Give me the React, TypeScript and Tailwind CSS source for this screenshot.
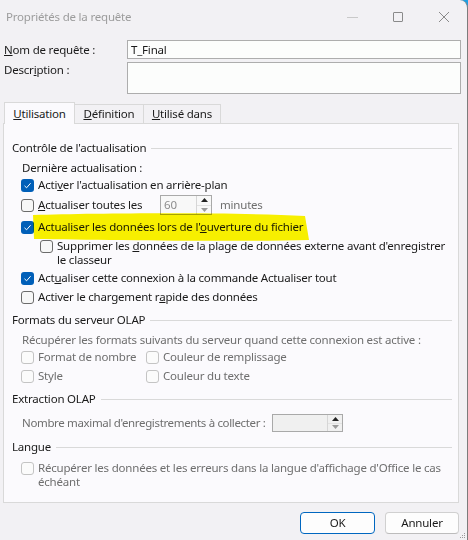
import React from 'react';

const font = "font-['Noto_Sans',sans-serif] text-[11.5px] tracking-[-0.2px]";

function Box({ checked = false, disabled = false }: { checked?: boolean; disabled?: boolean }) {
  if (checked) {
    return (
      <div className="w-[13px] h-[13px] shrink-0 rounded-[3px] bg-[#005fb8] flex items-center justify-center">
        <svg width="9" height="9" viewBox="0 0 9 9">
          <path d="M1.5 4.8 L3.6 6.8 L7.6 2.2" fill="none" stroke="#ffffff" strokeWidth="1" />
        </svg>
      </div>
    );
  }
  return (
    <div
      className={
        disabled
          ? 'w-[13px] h-[13px] shrink-0 rounded-[3px] border border-[#c4c4c4] bg-[#fbfbfb]'
          : 'w-[13px] h-[13px] shrink-0 rounded-[3px] border border-[#6b6b6b] bg-[#f7f7f7]'
      }
    />
  );
}

function Heading({ label, className }: { label: string; className: string }) {
  return (
    <div className={'flex items-center h-[16px] pl-[8px] pr-[6px] text-[#1a1a1a] ' + className}>
      <span className="whitespace-nowrap">{label}</span>
      <div className="flex-1 h-px bg-[#d9d9d9] ml-[5px]" />
    </div>
  );
}

function Spin({ width, value, bg }: { width: string; value?: string; bg: string }) {
  return (
    <div className={'flex shrink-0 border border-[#a9a9a9] ' + width + ' ' + bg}>
      <div className="flex-1 pl-[3px] text-[#8d8d8d] flex items-center">{value}</div>
      <div className="w-[15px] flex flex-col border-l border-[#d6d6d6]">
        <div className="flex-1 flex items-center justify-center border-b border-[#e2e2e2]">
          <svg width="7" height="4" viewBox="0 0 7 4"><path d="M0 4 L3.5 0 L7 4 Z" fill="#222" /></svg>
        </div>
        <div className="flex-1 flex items-center justify-center">
          <svg width="7" height="4" viewBox="0 0 7 4"><path d="M0 0 L3.5 4 L7 0 Z" fill="#9a9a9a" /></svg>
        </div>
      </div>
    </div>
  );
}

export default function App() {
  return (
    <div className={'w-[468px] h-[540px] bg-[#1e9fe2] overflow-hidden text-[#1a1a1a] ' + font}>
      <div className="relative w-[468px] h-[540px] bg-[#f2f1f4] rounded-tr-[8px] border-r border-[#7c7c7c]">
        {/* Title bar */}
        <div className="flex h-[34px] items-center">
          <div className="pl-[6px] text-[#9c9c9c] flex-1">Propriétés de la requête</div>
          <div className="flex h-full">
            <div className="w-[46px] flex items-center justify-center">
              <div className="w-[11px] h-px bg-[#c9c9c9]" />
            </div>
            <div className="w-[46px] flex items-center justify-center">
              <div className="w-[10px] h-[10px] border border-[#8a8a8a] rounded-[1px]" />
            </div>
            <div className="w-[46px] flex items-center justify-center">
              <svg width="12" height="12" viewBox="0 0 12 12">
                <path d="M1 1 L11 11 M11 1 L1 11" stroke="#8a8a8a" strokeWidth="1" />
              </svg>
            </div>
          </div>
        </div>

        {/* Name / description */}
        <div className="pl-[4px]">
          <div className="flex items-center mt-[6px] h-[19px]">
            <div className="w-[123px]"><u>N</u>om de requête :</div>
            <div className="w-[334px] h-[19px] border border-[#adadad] bg-[#fcfdfc] pl-[3px] flex items-center">T_Final</div>
          </div>
          <div className="flex items-start mt-[3px]">
            <div className="w-[123px] leading-[16px]">Descr<u>i</u>ption :</div>
            <div className="w-[334px] h-[32px] border border-[#adadad] bg-[#fcfdfc]" />
          </div>
        </div>

        {/* Tabs */}
        <div className="flex items-end h-[21px] mt-[8px] pl-[4px]">
          <div className="relative z-10 -mb-px w-[71px] h-[22px] border border-b-0 border-[#d9d9d9] bg-[#fbfafd] flex items-center justify-center">
            <span><u>U</u>tilisation</span>
          </div>
          <div className="w-[69px] h-[19px] border border-l-0 border-b-0 border-[#d9d9d9] bg-[#f2f1f4] flex items-center justify-center">
            <span><u>D</u>éfinition</span>
          </div>
          <div className="w-[77px] h-[19px] border border-l-0 border-b-0 border-[#d9d9d9] bg-[#f2f1f4] flex items-center justify-center">
            <span><u>U</u>tilisé dans</span>
          </div>
        </div>

        {/* Panel */}
        <div className="relative ml-[3px] w-[456px] h-[380px] border border-[#d9d9d9] bg-[#fbfafd] pt-[16px]">
          <Heading label="Contrôle de l'actualisation" className="" />
          <div className="mt-[4px] h-[16px] pl-[18px] flex items-center">Dernière actualisation :</div>
          <div className="mt-[1px] h-[16px] pl-[17px] flex items-center gap-[4px]">
            <Box checked />
            <span>Acti<u>v</u>er l'actualisation en arrière-plan</span>
          </div>
          <div className="mt-[4px] h-[16px] pl-[17px] flex items-center gap-[4px]">
            <Box />
            <span className="w-[118px] whitespace-nowrap"><u>A</u>ctualiser toutes les</span>
            <Spin width="w-[52px] h-[20px]" value="60" bg="bg-[#f8f8f8]" />
            <span className="ml-[4px] text-[#6e6e6e]">minutes</span>
          </div>
          <div className="mt-[6px] h-[16px] pl-[17px] flex items-center gap-[4px]">
            <Box checked />
            <span>Actualiser les données lors de l'<u>o</u>uverture du fichier</span>
          </div>
          <div className="mt-[4px] pl-[36px] flex items-start gap-[4px] leading-[14px]">
            <div className="pt-[1px]"><Box /></div>
            <span className="whitespace-nowrap">
              Supprimer les <u>d</u>onnées de la plage de données externe avant d'enregistrer<br />le classeur
            </span>
          </div>
          <div className="mt-[3px] h-[16px] pl-[17px] flex items-center gap-[4px]">
            <Box checked />
            <span>Act<u>u</u>aliser cette connexion à la commande Actualiser tout</span>
          </div>
          <div className="mt-[3px] h-[16px] pl-[17px] flex items-center gap-[4px]">
            <Box />
            <span>Activer le chargement r<u>a</u>pide des données</span>
          </div>

          <Heading label="Formats du serveur OLAP" className="mt-[7px]" />
          <div className="mt-[4px] h-[16px] pl-[18px] flex items-center text-[#6e6e6e]">
            Récupérer les formats suivants du serveur quand cette connexion est active :
          </div>
          <div className="mt-[1px] h-[16px] pl-[17px] flex items-center text-[#6e6e6e]">
            <div className="w-[125px] flex items-center gap-[4px]"><Box disabled /><span>Format de nombre</span></div>
            <div className="flex items-center gap-[4px]"><Box disabled /><span>Couleur de remplissage</span></div>
          </div>
          <div className="mt-[3px] h-[16px] pl-[17px] flex items-center text-[#6e6e6e]">
            <div className="w-[125px] flex items-center gap-[4px]"><Box disabled /><span>Style</span></div>
            <div className="flex items-center gap-[4px]"><Box disabled /><span>Couleur du texte</span></div>
          </div>

          <Heading label="Extraction OLAP" className="mt-[7px]" />
          <div className="mt-[8px] h-[16px] pl-[18px] flex items-center text-[#6e6e6e]">
            <span className="w-[250px] whitespace-nowrap tracking-[-0.35px]">Nombre maximal d'enregistrements à collecter :</span>
            <Spin width="w-[71px] h-[18px]" bg="bg-[#f0f0f0]" />
          </div>

          <Heading label="Langue" className="mt-[8px]" />
          <div className="mt-[6px] pl-[17px] flex items-start gap-[4px] leading-[14px] text-[#6e6e6e]">
            <div className="pt-[1px]"><Box disabled /></div>
            <span className="whitespace-nowrap">
              Récupérer les données et les erreurs dans la langue d'affichage d'Office le cas<br />échéant
            </span>
          </div>

          {/* highlighter mark */}
          <svg
            className="absolute left-[29px] top-[89px] mix-blend-multiply pointer-events-none"
            width="276"
            height="30"
            viewBox="0 0 276 30"
          >
            <path d="M0 2 C70 0 200 -1 272 3 L276 27 C200 29 70 27 1 26 Z" fill="#fbf400" />
          </svg>
        </div>

        {/* Buttons */}
        <div className="flex justify-end gap-[10px] mt-[9px] pr-[8px]">
          <div className="w-[75px] h-[22px] rounded-[4px] border border-[#0067c0] bg-[#fdfdfd] flex items-center justify-center">OK</div>
          <div className="w-[74px] h-[22px] rounded-[4px] border border-[#d0d0d0] border-b-[#bcbcbc] bg-[#fdfdfd] flex items-center justify-center">Annuler</div>
        </div>

        {/* resize grip */}
        <svg className="absolute right-[1px] bottom-[1px]" width="8" height="8" viewBox="0 0 8 8">
          <rect x="6" y="2" width="1" height="1" fill="#9a9a9a" />
          <rect x="4" y="4" width="1" height="1" fill="#9a9a9a" />
          <rect x="6" y="4" width="1" height="1" fill="#9a9a9a" />
          <rect x="2" y="6" width="1" height="1" fill="#9a9a9a" />
          <rect x="4" y="6" width="1" height="1" fill="#9a9a9a" />
          <rect x="6" y="6" width="1" height="1" fill="#9a9a9a" />
        </svg>
      </div>
    </div>
  );
}
